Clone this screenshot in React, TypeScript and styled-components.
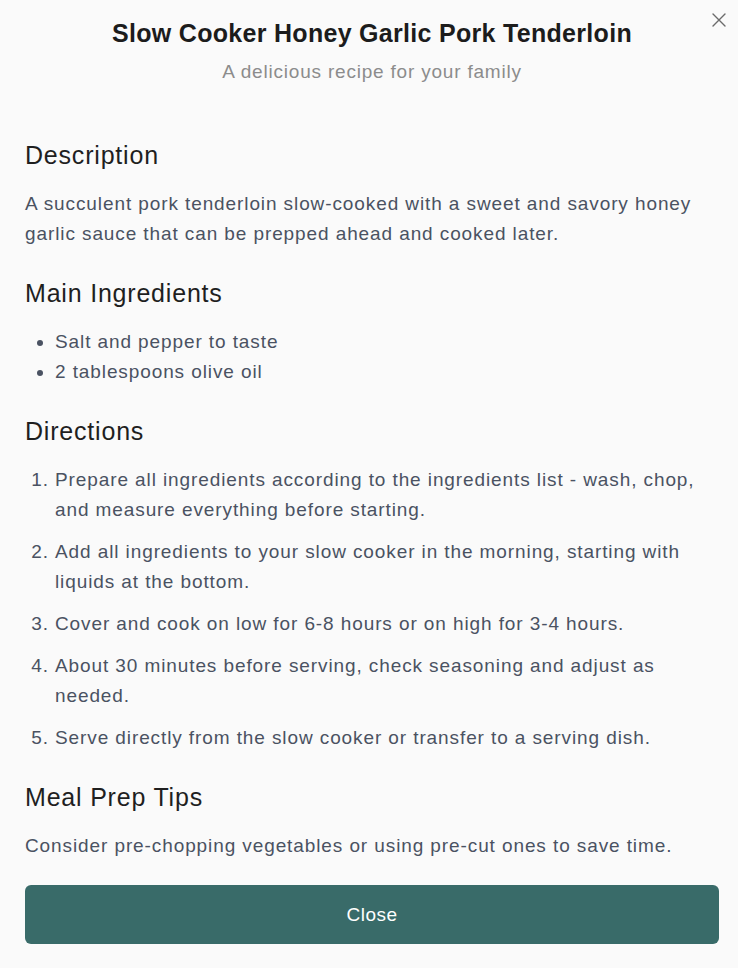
import React from "react";
import styled, { createGlobalStyle } from "styled-components";

const Global = createGlobalStyle`
  html, body { margin: 0; padding: 0; background: #fafafa; }
  body { font-family: "Liberation Sans", Arial, sans-serif; }
  * { box-sizing: border-box; }
`;

const Modal = styled.div`
  position: relative;
  width: 738px;
  min-height: 968px;
  background: #fafafa;
  padding: 19px 19px 25px 25px;
  display: flex;
  flex-direction: column;
`;

const CloseIcon = styled.button`
  position: absolute;
  top: 12px;
  right: 11px;
  width: 16px;
  height: 16px;
  padding: 0;
  border: none;
  background: transparent;
  color: #6b6b6b;
  display: flex;
  align-items: center;
  justify-content: center;
  cursor: pointer;
`;

const Header = styled.header`
  display: flex;
  flex-direction: column;
  align-items: center;
  gap: 10px;
  margin-bottom: 55px;
`;

const Title = styled.h1`
  margin: 0;
  font-size: 25px;
  line-height: 29px;
  font-weight: 700;
  letter-spacing: 0.3px;
  color: #1c1c1c;
`;

const Subtitle = styled.p`
  margin: 0;
  font-size: 19px;
  line-height: 28px;
  letter-spacing: 0.8px;
  color: #8c8c8c;
`;

const Section = styled.section`
  display: flex;
  flex-direction: column;
  gap: 19px;
  margin-bottom: 30px;
`;

const Heading = styled.h2`
  margin: 0;
  font-size: 25px;
  line-height: 29px;
  font-weight: 400;
  letter-spacing: 0.8px;
  color: #1f1f1f;
`;

const Text = styled.p`
  margin: 0;
  font-size: 19px;
  line-height: 30px;
  letter-spacing: 0.9px;
  color: #4a5262;
`;

const List = styled.ul<{ $ordered?: boolean }>`
  margin: 0;
  padding-left: 30px;
  list-style: ${(p) => (p.$ordered ? "decimal" : "disc")};
  font-size: 19px;
  line-height: 30px;
  letter-spacing: 0.9px;
  color: #4a5262;
  li {
    margin-bottom: ${(p) => (p.$ordered ? "12px" : "0")};
  }
  li:last-child {
    margin-bottom: 0;
  }
`;

const Button = styled.button`
  margin-top: -6px;
  width: 694px;
  height: 59px;
  border: none;
  border-radius: 6px;
  background: #396b69;
  color: #ffffff;
  font-family: "Liberation Sans", Arial, sans-serif;
  font-size: 19px;
  letter-spacing: 0.5px;
  cursor: pointer;
`;

export default function App() {
  return (
    <>
      <Global />
      <Modal>
        <CloseIcon aria-label="Close">
          <svg width="16" height="16" viewBox="0 0 16 16" fill="none" stroke="currentColor" strokeWidth="1.4" strokeLinecap="round">
            <path d="M2 2L14 14M14 2L2 14" />
          </svg>
        </CloseIcon>
        <Header>
          <Title>Slow Cooker Honey Garlic Pork Tenderloin</Title>
          <Subtitle>A delicious recipe for your family</Subtitle>
        </Header>
        <Section>
          <Heading>Description</Heading>
          <Text>
            A succulent pork tenderloin slow-cooked with a sweet and savory honey garlic sauce that can be prepped ahead and cooked later.
          </Text>
        </Section>
        <Section>
          <Heading>Main Ingredients</Heading>
          <List>
            <li>Salt and pepper to taste</li>
            <li>2 tablespoons olive oil</li>
          </List>
        </Section>
        <Section>
          <Heading>Directions</Heading>
          <List as="ol" $ordered>
            <li>Prepare all ingredients according to the ingredients list - wash, chop, and measure everything before starting.</li>
            <li>Add all ingredients to your slow cooker in the morning, starting with liquids at the bottom.</li>
            <li>Cover and cook on low for 6-8 hours or on high for 3-4 hours.</li>
            <li>About 30 minutes before serving, check seasoning and adjust as needed.</li>
            <li>Serve directly from the slow cooker or transfer to a serving dish.</li>
          </List>
        </Section>
        <Section>
          <Heading>Meal Prep Tips</Heading>
          <Text>Consider pre-chopping vegetables or using pre-cut ones to save time.</Text>
        </Section>
        <Button>Close</Button>
      </Modal>
    </>
  );
}
